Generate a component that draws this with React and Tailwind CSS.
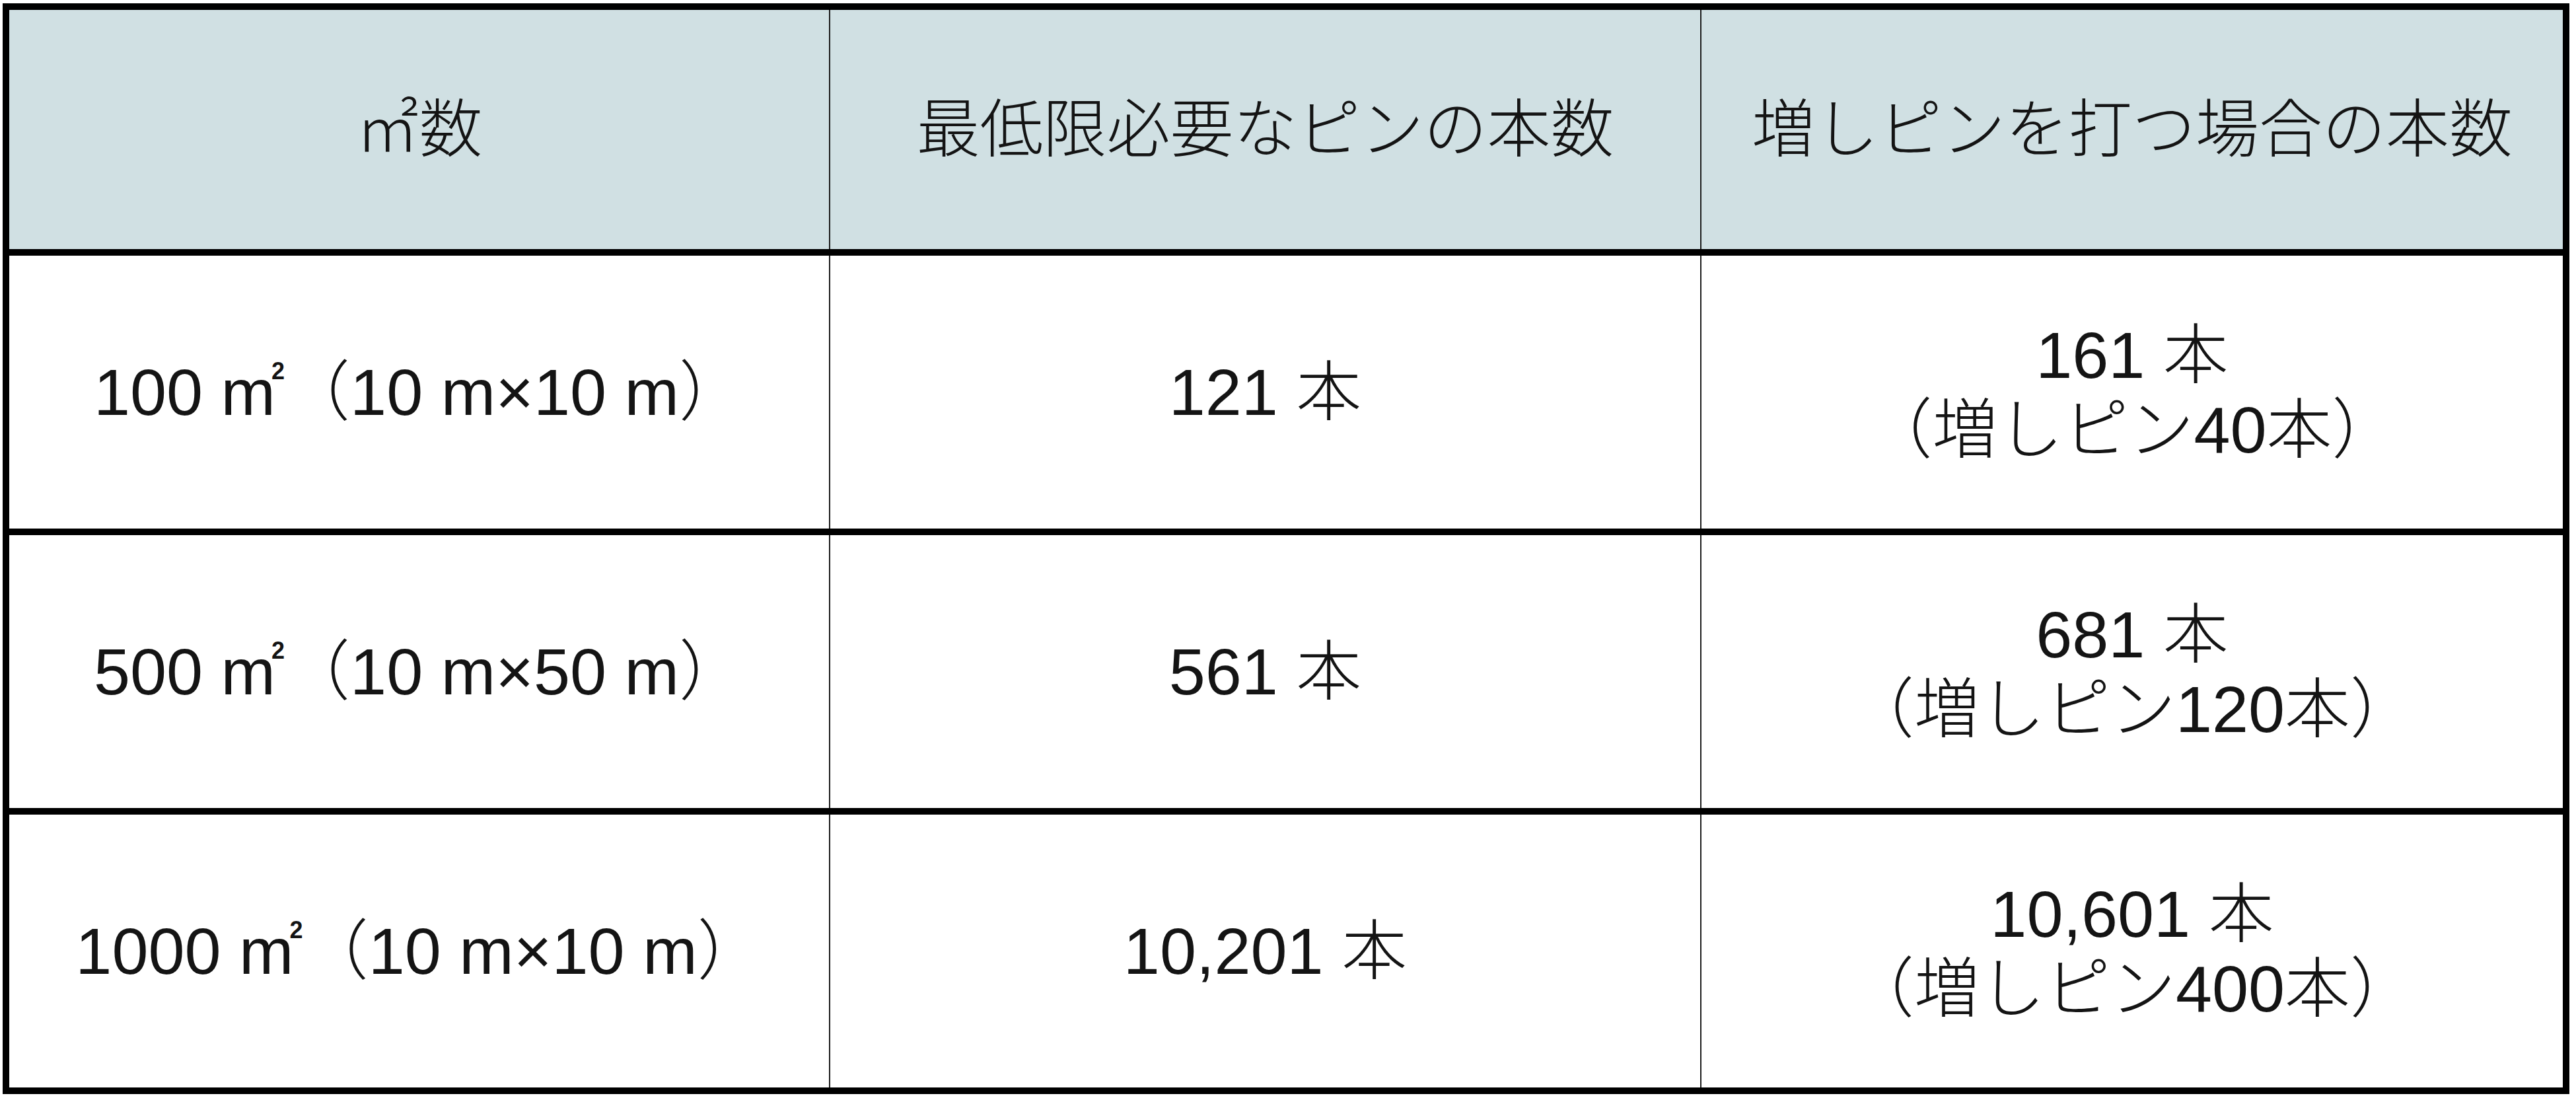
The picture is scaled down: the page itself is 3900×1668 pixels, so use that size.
const rows = [
  { area: '100', size: '10 m×10 m', min: '121 本', more: '161 本', extra: '（増しピン40本）' },
  { area: '500', size: '10 m×50 m', min: '561 本', more: '681 本', extra: '（増しピン120本）' },
  { area: '1000', size: '10 m×10 m', min: '10,201 本', more: '10,601 本', extra: '（増しピン400本）' },
];

const font = "font-['Liberation_Sans','Noto_Sans_CJK_JP',sans-serif]";

export default function App() {
  return (
    <div className={`w-[3900px] h-[1668px] bg-white pl-[4px] pt-[5px] text-[#141414] ${font}`}>
      <div className="w-[3886px] border-[10px] border-black">
        {/* header */}
        <div className="flex h-[372px] border-b-[10px] border-black bg-[#d0e0e3] text-[96px] font-light leading-none">
          <div className="w-[1241px] flex items-center justify-center">㎡数</div>
          <div className="w-[1319px] border-l-2 border-[#1e1e1e] flex items-center justify-center">最低限必要なピンの本数</div>
          <div className="w-[1306px] border-l-2 border-[#1e1e1e] flex items-center justify-center">増しピンを打つ場合の本数</div>
        </div>

        {rows.map((r, i) => (
          <div
            key={i}
            className={`flex text-[99px] font-light ${i < rows.length - 1 ? 'h-[423px] border-b-[10px] border-black' : 'h-[413px]'}`}
          >
            <div className="w-[1241px] flex items-center justify-center leading-none whitespace-nowrap">
              <span>
                {r.area} m<sup className="text-[36px] font-bold relative -top-[54px] -ml-[6px]">2</sup>（{r.size}）
              </span>
            </div>
            <div className="w-[1319px] border-l-2 border-[#1e1e1e] flex items-center justify-center leading-none whitespace-nowrap">
              {r.min}
            </div>
            <div className="w-[1306px] border-l-2 border-[#1e1e1e] flex flex-col items-center justify-center leading-[113px] whitespace-nowrap">
              <div>{r.more}</div>
              <div>{r.extra}</div>
            </div>
          </div>
        ))}
      </div>
    </div>
  );
}
